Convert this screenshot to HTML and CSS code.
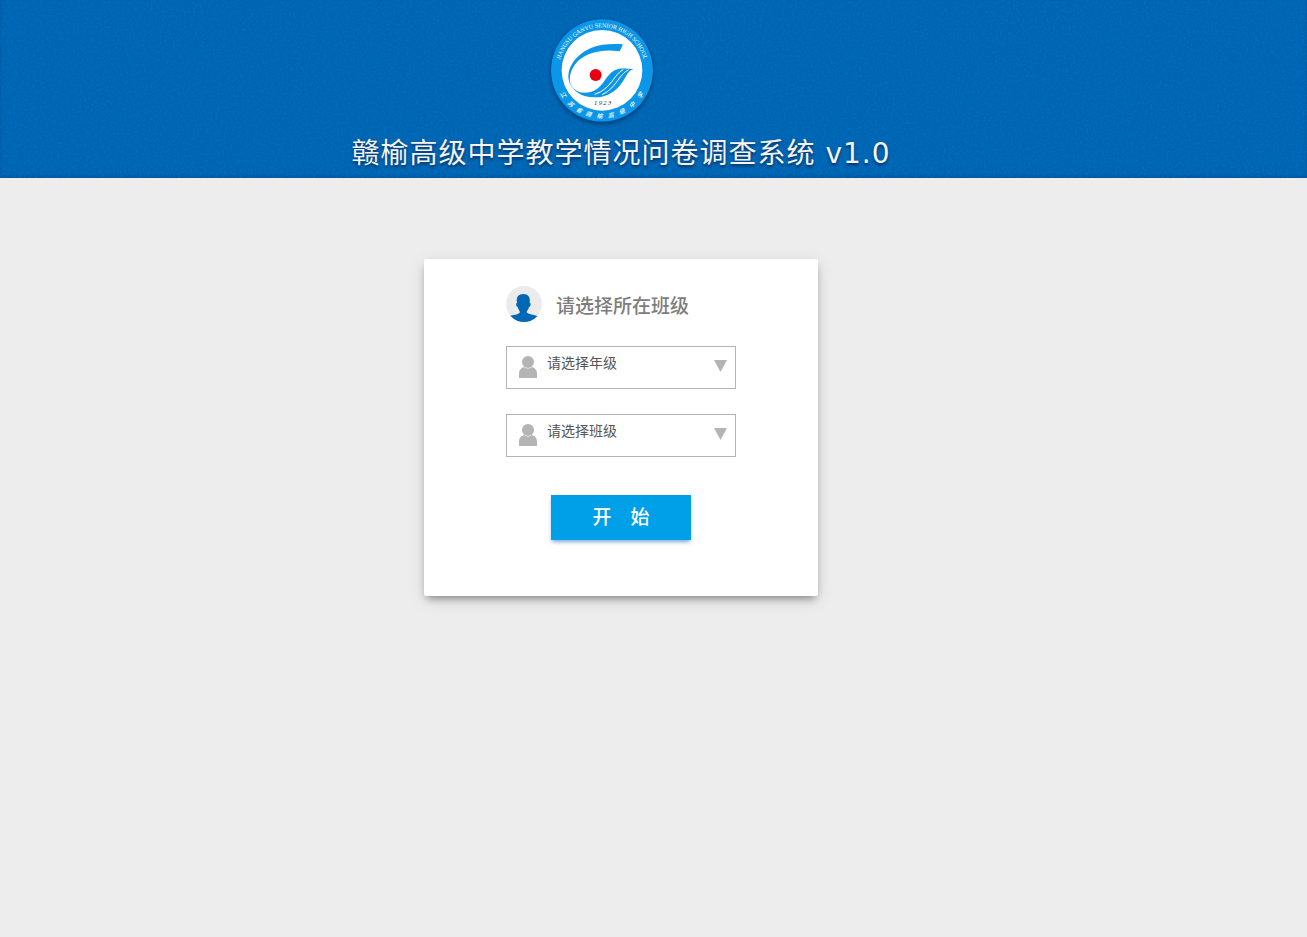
FILE: index.html
```
<!DOCTYPE html>
<html lang="zh-CN">
<head>
	<meta charset="utf-8">
	<meta name="viewport" content="width=device-width"/>
	<title>赣榆高级中学教学情况问卷调查系统</title>
	<link rel="stylesheet" href="styles.css">
</head>
<body>
<div class="head">
	<svg class="grain" aria-hidden="true">
		<filter id="noise">
			<feTurbulence type="fractalNoise" baseFrequency="0.45" numOctaves="2" seed="4"/>
			<feColorMatrix values="0 0 0 0 0  0 0 0 0 0.2  0 0 0 0 0.45  1.6 0 0 0 -0.65"/>
		</filter>
		<rect width="100%" height="100%" filter="url(#noise)"/>
	</svg>
	<div class="brand">
		<svg class="logo" viewBox="33 27 306 309" role="img" aria-label="校徽">
			<defs>
				<path id="arc" d="M57 181a129 129 0 0 1 258 0"/>
			</defs>
			<circle cx="186" cy="181" r="153" fill="#0c96e8"/>
			<circle cx="186" cy="181" r="121" fill="#fff"/>
			<path fill="#0c96e8" d="M249 103L239 124C190 116 146 126 117 150C88 178 80 218 103 238C123 254 152 250 172 236C198 216 202 185 235 177C250 174 264 177 281 177C264 181 261 196 248 215C230 243 201 262 166 262C127 263 92 242 86 209C80 166 117 129 153 114C183 102 215 101 249 103Z"/>
			<path fill="none" stroke="#fff" stroke-width="3" d="M164 253C214 238 222 191 250 179M186 254C228 236 236 193 266 179"/>
			<circle cx="167" cy="195" r="18" fill="#e60012"/>
			<text class="year" x="190" y="286">1923</text>
			<text class="ring"><textPath href="#arc" startOffset="50%">JIANGSU GANYU SENIOR HIGH SCHOOL</textPath></text>
			<g class="ring-cn">
				<text x="186" y="325" transform="rotate(58 186 181)">江</text>
				<text x="186" y="325" transform="rotate(43 186 181)">苏</text>
				<text x="186" y="325" transform="rotate(30 186 181)">省</text>
				<text x="186" y="325" transform="rotate(17 186 181)">赣</text>
				<text x="186" y="325" transform="rotate(3 186 181)">榆</text>
				<text x="186" y="325" transform="rotate(-11 186 181)">高</text>
				<text x="186" y="325" transform="rotate(-26 186 181)">级</text>
				<text x="186" y="325" transform="rotate(-41 186 181)">中</text>
				<text x="186" y="325" transform="rotate(-57 186 181)">学</text>
			</g>
		</svg>
		<h1>赣榆高级中学教学情况问卷调查系统 v1.0</h1>
	</div>
</div>
<div class="main">
	<form class="card">
		<div class="title">
			<svg class="avatar" viewBox="0 0 108 108" aria-hidden="true">
				<clipPath id="round"><circle cx="54" cy="54" r="54"/></clipPath>
				<circle cx="54" cy="54" r="54" fill="#ebebeb"/>
				<path clip-path="url(#round)" fill="#0068b7" d="M33 50C30 32 38 24 52 24C66 24 74 33 71 50C76 51 74 61 69 63C67 72 62 75 62 79C66 86 84 86 96 91V108H8V91C22 86 38 87 42 79C41 74 37 71 35 63C30 61 29 51 33 50Z"/>
			</svg>
			<h2>请选择所在班级</h2>
		</div>
		<div class="field">
			<svg class="person" viewBox="0 0 19 22" aria-hidden="true">
				<circle cx="9" cy="6" r="6"/>
				<path d="M0 22V18C0 14 2 12 5 11Q9 14 13 11C16 12 18 14 18 18V22Z"/>
			</svg>
			<select aria-label="年级">
				<option>请选择年级</option>
			</select>
			<svg class="arrow" viewBox="0 0 26 24" aria-hidden="true"><path d="M0 0H26L13 24Z"/></svg>
		</div>
		<div class="field">
			<svg class="person" viewBox="0 0 19 22" aria-hidden="true">
				<circle cx="9" cy="6" r="6"/>
				<path d="M0 22V18C0 14 2 12 5 11Q9 14 13 11C16 12 18 14 18 18V22Z"/>
			</svg>
			<select aria-label="班级">
				<option>请选择班级</option>
			</select>
			<svg class="arrow" viewBox="0 0 26 24" aria-hidden="true"><path d="M0 0H26L13 24Z"/></svg>
		</div>
		<button type="button" class="start">开&#12288;始</button>
	</form>
</div>
</body>
</html>
```
FILE: styles.css
```
* {
	padding: 0;
	margin: 0;
	box-sizing: border-box;
}

body {
	background: #ededed;
	font-family: "Noto Sans", "Noto Sans CJK SC", sans-serif;
}

.head {
	position: relative;
	background: #0064b4;
	padding: 19px 65px 4px 0;
	box-shadow: inset 0 -2px 3px rgba(0, 40, 100, 0.3);
}

.grain {
	position: absolute;
	left: 0;
	top: 0;
	width: 100%;
	height: 100%;
	opacity: 0.7;
}

.brand {
	position: relative;
	display: flex;
	flex-direction: column;
	align-items: center;
}

.logo {
	display: block;
	width: 102px;
	height: 103px;
	margin-right: 38px;
	border-radius: 50%;
	box-shadow: 0 2px 4px rgba(0, 20, 60, 0.5);
}

.ring {
	fill: #fff;
	font: 18px "Liberation Serif", serif;
	text-anchor: middle;
}

.ring-cn {
	fill: #fff;
	font: italic 500 18px "Noto Sans CJK SC", sans-serif;
	text-anchor: middle;
}

.year {
	fill: #333;
	font: italic 20px "Liberation Serif", serif;
	letter-spacing: 4px;
	text-anchor: middle;
}

h1 {
	margin-top: 12px;
	color: #f4f4f4;
	font-family: "DejaVu Sans", "Noto Sans CJK SC", sans-serif;
	font-size: 28px;
	font-weight: normal;
	line-height: 40px;
	letter-spacing: 1px;
	white-space: nowrap;
	text-shadow: 0 2px 3px rgba(0, 20, 60, 0.7);
}

.main {
	padding: 81px 65px 40px 0;
}

.card {
	width: 394px;
	margin: 0 auto;
	padding: 27px 82px 56px;
	background: #fff;
	border-radius: 2px;
	box-shadow: 0 5px 8px -3px rgba(0, 0, 0, 0.4), 0 4px 16px rgba(0, 0, 0, 0.12);
}

.title {
	display: flex;
	align-items: center;
	gap: 14px;
	margin-bottom: 24px;
}

.avatar {
	width: 36px;
	height: 36px;
}

h2 {
	padding-top: 4px;
	color: #7d7d7d;
	font-size: 19px;
	font-weight: 500;
	line-height: 32px;
}

.field {
	display: grid;
	grid-template-columns: 19px 1fr 13px;
	height: 43px;
	margin-bottom: 25px;
	padding: 0 8px 0 12px;
	border: 1px solid #b4b4b4;
}

.person {
	width: 19px;
	height: 22px;
	margin-top: 9px;
	fill: #b4b4b4;
}

select {
	appearance: none;
	height: 30px;
	padding-left: 9px;
	border: none;
	outline: none;
	background: none;
	color: #555;
	font-family: inherit;
	font-size: 14px;
}

.arrow {
	width: 13px;
	height: 12px;
	margin-top: 13px;
	fill: #b4b4b4;
}

.start {
	display: block;
	width: 140px;
	height: 45px;
	margin: 38px auto 0;
	padding-bottom: 4px;
	border: none;
	background: #00a0e9;
	box-shadow: 0 3px 4px -1px rgba(0, 80, 180, 0.5);
	color: #fff;
	font-family: inherit;
	font-size: 19px;
	font-weight: 500;
}
```
